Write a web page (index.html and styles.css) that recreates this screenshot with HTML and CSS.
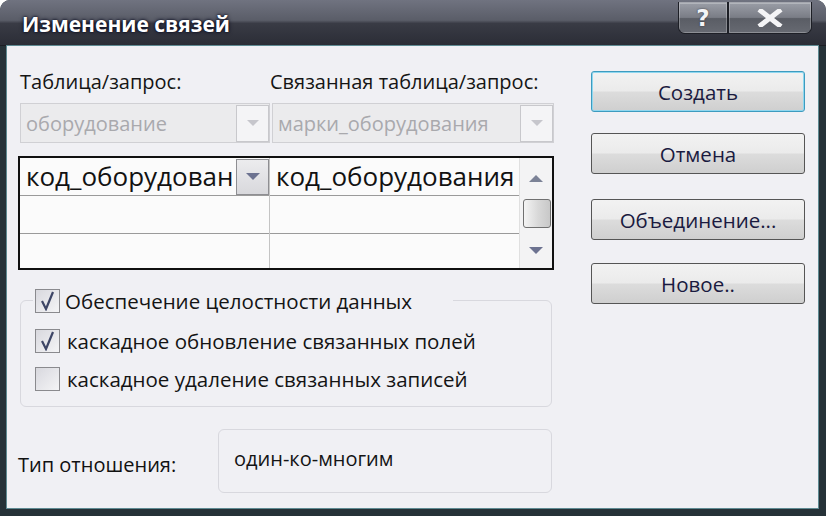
FILE: index.html
```html
<!DOCTYPE html>
<html lang="ru">
<head>
    <meta charset="UTF-8">
    <title>Изменение связей</title>
    <link rel="stylesheet" href="styles.css">
</head>
<body>
<div class="window">
    <div class="titlebar">
        <span class="title">Изменение связей</span>
        <div class="caption-buttons">
            <button class="cap-btn help">?</button>
            <button class="cap-btn close">
                <svg width="26" height="18" viewBox="0 0 26 18"><path d="M4 2 L22 16 M22 2 L4 16" stroke="#f4f4f6" stroke-width="5" stroke-linecap="square"/></svg>
            </button>
        </div>
    </div>

    <div class="content">
        <div class="left">
            <div class="labels">
                <span class="lbl-a">Таблица/запрос:</span>
                <span class="lbl-b">Связанная таблица/запрос:</span>
            </div>

            <div class="combos">
                <div class="combo combo-a">
                    <span>оборудование</span>
                    <span class="drop"><i class="tri light"></i></span>
                </div>
                <div class="combo combo-b">
                    <span>марки_оборудования</span>
                    <span class="drop"><i class="tri light"></i></span>
                </div>
            </div>

            <div class="grid">
                <div class="cols">
                    <div class="col col-a">
                        <div class="cell first">
                            <span class="cell-text">код_оборудован</span>
                            <span class="cell-drop"><i class="tri"></i></span>
                        </div>
                        <div class="cell"></div>
                        <div class="cell last"></div>
                    </div>
                    <div class="col col-b">
                        <div class="cell first"><span class="cell-text">код_оборудования</span></div>
                        <div class="cell"></div>
                        <div class="cell last"></div>
                    </div>
                </div>
                <div class="scrollbar">
                    <i class="tri up"></i>
                    <div class="thumb"></div>
                    <i class="tri"></i>
                </div>
            </div>

            <div class="group">
                <div class="check legend">
                    <span class="box checked">
                        <svg width="16" height="20" viewBox="0 0 16 20"><path d="M2 10 L6 18 L13 1" fill="none" stroke="#3d4566" stroke-width="2.2"/></svg>
                    </span>
                    <span>Обеспечение целостности данных</span>
                </div>
                <div class="check">
                    <span class="box checked">
                        <svg width="16" height="20" viewBox="0 0 16 20"><path d="M2 10 L6 18 L13 1" fill="none" stroke="#3d4566" stroke-width="2.2"/></svg>
                    </span>
                    <span>каскадное обновление связанных полей</span>
                </div>
                <div class="check">
                    <span class="box"></span>
                    <span>каскадное удаление связанных записей</span>
                </div>
            </div>

            <div class="relation">
                <span class="rel-label">Тип отношения:</span>
                <div class="rel-box">один-ко-многим</div>
            </div>
        </div>

        <div class="right">
            <button class="btn default">Создать</button>
            <button class="btn">Отмена</button>
            <button class="btn">Объединение...</button>
            <button class="btn">Новое..</button>
        </div>
    </div>
</div>
</body>
</html>
```

FILE: styles.css
```css
* {
    margin: 0;
    padding: 0;
    box-sizing: border-box;
}

body {
    width: 826px;
    height: 516px;
    overflow: hidden;
    background: #ffffff;
    font-family: "Open Sans", "DejaVu Sans", sans-serif;
    color: #111;
}

.window {
    width: 826px;
    height: 516px;
    display: flex;
    flex-direction: column;
    background: #263238;
    border-radius: 10px 10px 0 0;
    overflow: hidden;
}

/* title bar */
.titlebar {
    height: 46px;
    flex-shrink: 0;
    display: flex;
    align-items: flex-start;
    justify-content: space-between;
    padding: 0 14px 0 22px;
    background: linear-gradient(#707380 0%, #5a5d68 45%, #393b45 52%, #2b2d36 100%);
    border-bottom: 1px solid #1c1e24;
}

.title {
    margin-top: 10px;
    font-family: "Open Sans", "DejaVu Sans", sans-serif;
    font-weight: 700;
    font-size: 21px;
    color: #ffffff;
    text-shadow: 0 0 4px #0a0c20, 0 0 2px #0a0c20;
}

.caption-buttons {
    display: flex;
    margin-top: 2px;
    gap: 2px;
    border: 1px solid #1d1f26;
    border-top: none;
    border-radius: 0 0 7px 7px;
    background: #1d1f26;
    overflow: hidden;
}

.cap-btn {
    height: 31px;
    border: none;
    border-top: 1px solid #a4a6ae;
    background: linear-gradient(#9a9da6 0%, #7a7d86 48%, #5a5d65 52%, #676a72 100%);
    box-shadow: inset 0 0 0 1px rgba(255, 255, 255, 0.25);
    color: #f4f4f6;
    display: flex;
    align-items: center;
    justify-content: center;
}

.cap-btn.help {
    width: 48px;
    font-family: "DejaVu Sans", sans-serif;
    font-weight: 700;
    font-size: 23px;
    text-shadow: 0 0 2px #30323a;
}

.cap-btn.close {
    width: 82px;
}

/* dialog body */
.content {
    flex: 1;
    display: flex;
    margin: 0 8px 8px 7px;
    padding: 22px 13px 0 11px;
    background: #f0f0f4;
    box-shadow: 0 0 0 1px #5e8a92;
}

.left {
    width: 536px;
}

.labels {
    height: 35px;
    display: flex;
    font-size: 20px;
    color: #151515;
}

.lbl-a {
    width: 252px;
    padding-left: 2px;
}

.combos {
    display: flex;
    gap: 2px;
    padding-left: 2px;
    height: 40px;
}

.combo {
    display: flex;
    align-items: center;
    justify-content: space-between;
    background: #ebebed;
    border: 1px solid #d0d0d4;
    font-size: 20px;
    color: #a9a9ad;
    padding-left: 5px;
}

.combo-a {
    width: 250px;
}

.combo-b {
    width: 282px;
}

.drop {
    width: 33px;
    height: 37px;
    border: 1px solid #c8c8cc;
    background: #f4f4f6;
    display: flex;
    align-items: center;
    justify-content: center;
}

.tri {
    width: 0;
    height: 0;
    border-left: 7px solid transparent;
    border-right: 7px solid transparent;
    border-top: 7px solid #6c7290;
}

.tri.light {
    border-left-width: 6px;
    border-right-width: 6px;
    border-top: 6px solid #c6c6cc;
}

.tri.up {
    border-top: none;
    border-bottom: 7px solid #7b8296;
}

/* field grid */
.grid {
    margin-top: 13px;
    height: 114px;
    display: flex;
    border: 2px solid #101010;
    background: #fbfbfb;
}

.cols {
    flex: 1;
    display: flex;
}

.col-a {
    width: 250px;
    border-right: 1px solid #c4c4c4;
}

.col-b {
    flex: 1;
    overflow: hidden;
}

.cell {
    height: 38px;
    border-bottom: 1px solid #9a9a9a;
    display: flex;
    align-items: center;
    overflow: hidden;
    white-space: nowrap;
}

.cell.last {
    border-bottom: none;
    height: 34px;
}

.cell-text {
    font-size: 26px;
    padding-left: 6px;
    color: #121212;
    flex: 1;
    overflow: hidden;
    position: relative;
    top: -1px;
}

.col-a .cell-text {
    max-width: 216px;
}

.cell-drop {
    width: 33px;
    height: 36px;
    flex-shrink: 0;
    border: 1px solid #8e8e92;
    background: linear-gradient(#ececee, #d8d8dc);
    display: flex;
    align-items: center;
    justify-content: center;
}

.scrollbar {
    width: 33px;
    flex-shrink: 0;
    display: flex;
    flex-direction: column;
    align-items: center;
    justify-content: space-between;
    padding: 17px 0 14px;
    background: #f3f3f4;
    border-left: 1px solid #e0e0e0;
}

.thumb {
    width: 28px;
    height: 29px;
    margin: 0 0 2px 2px;
    border: 1px solid #707070;
    border-radius: 3px;
    background: linear-gradient(90deg, #f4f4f4, #d8d8d8 55%, #c8c8c8);
}

/* checkbox group */
.group {
    margin: 30px 2px 0 2px;
    height: 107px;
    border: 1px solid #d8d8de;
    border-radius: 6px;
    padding: 0 0 0 14px;
}

.check {
    display: flex;
    align-items: center;
    gap: 7px;
    height: 38px;
    font-size: 20.5px;
    color: #141414;
}

.check.legend {
    gap: 5px;
    margin-top: -21px;
    margin-left: -2px;
    width: 420px;
    padding-left: 2px;
    background: #f0f0f4;
    height: 42px;
}

.box {
    width: 25px;
    height: 24px;
    border: 1px solid #8a8a8e;
    background: linear-gradient(135deg, #d8d8de, #f4f4f6);
    display: flex;
    align-items: center;
    justify-content: center;
    flex-shrink: 0;
}

/* relation type */
.relation {
    margin-top: 22px;
    display: flex;
    align-items: center;
}

.rel-label {
    width: 200px;
    font-size: 20px;
    padding-top: 6px;
}

.rel-box {
    width: 334px;
    height: 64px;
    border: 1px solid #d8d8de;
    border-radius: 6px;
    padding: 19px 0 0 15px;
    font-size: 20px;
    color: #141414;
    line-height: 1;
}

/* command buttons */
.right {
    margin-left: 37px;
    padding-top: 3px;
    display: flex;
    flex-direction: column;
}

.btn {
    width: 214px;
    height: 41px;
    margin-bottom: 23px;
    border: 1px solid #555;
    border-radius: 3px;
    background: linear-gradient(#f2f2f2 0%, #ebebeb 48%, #dcdcdc 52%, #cfcfcf 100%);
    font-family: "Open Sans", "DejaVu Sans", sans-serif;
    font-size: 20.5px;
    color: #1a1a40;
}

.btn:nth-child(2) {
    margin-bottom: 25px;
}

.btn.default {
    border-color: #3d9bbf;
    box-shadow: inset 0 0 0 1px #8fd7ef;
    margin-bottom: 21px;
}
```
